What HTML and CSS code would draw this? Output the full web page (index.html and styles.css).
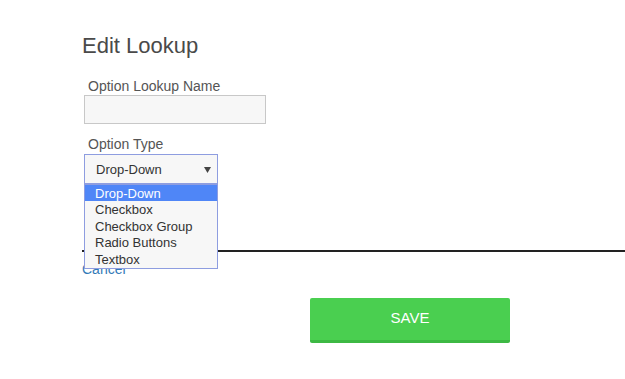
FILE: index.html
```html
<!DOCTYPE html>
<html lang="en">
<head>
    <meta charset="UTF-8">
    <meta name="viewport" content="width=device-width, initial-scale=1.0">
    <title>Edit Lookup</title>
    <link rel="stylesheet" href="styles.css">
</head>
<body>
    <div class="page">
        <h1 class="title">Edit Lookup</h1>

        <label class="field-label">Option Lookup Name</label>
        <div class="text-input"></div>

        <label class="field-label type-label">Option Type</label>
        <div class="select-wrap">
            <div class="select">
                <span>Drop-Down</span>
                <svg class="arrow" width="7" height="6" viewBox="0 0 7 6"><path d="M0 0 H7 L3.5 6 Z" fill="#444"/></svg>
            </div>
            <ul class="options">
                <li class="selected">Drop-Down</li>
                <li>Checkbox</li>
                <li>Checkbox Group</li>
                <li>Radio Buttons</li>
                <li>Textbox</li>
            </ul>
        </div>

        <div class="divider"></div>
        <a class="cancel" href="#">Cancel</a>

        <div class="actions">
            <button class="save-btn">SAVE</button>
        </div>
    </div>
</body>
</html>
```

FILE: styles.css
```css
body {
    margin: 0;
    padding: 0;
    font-family: "Liberation Sans", Arial, sans-serif;
    background: #fff;
    color: #555;
    overflow: hidden;
}

.page {
    padding: 33px 0 0 82px;
}

.title {
    margin: 0;
    font-size: 22px;
    line-height: 25px;
    font-weight: normal;
    color: #4a4a4a;
}

.field-label {
    display: block;
    margin: 20px 0 1px 6px;
    font-size: 14px;
    line-height: 16px;
    color: #555;
}

.type-label {
    margin-top: 12px;
    margin-bottom: 2px;
}

.text-input {
    margin-left: 2px;
    width: 180px;
    height: 27px;
    background: #f7f7f7;
    border: 1px solid #c8c8c8;
}

.select-wrap {
    position: relative;
    margin-left: 2px;
    width: 134px;
}

.select {
    display: flex;
    align-items: center;
    justify-content: space-between;
    box-sizing: border-box;
    height: 30px;
    padding: 0 6px 0 11px;
    background: #f7f7f7;
    border: 1px solid #8e9de0;
    font-size: 13px;
    color: #333;
}

.select span {
    padding-top: 1px;
}

.arrow {
    margin-top: 1px;
}

.options {
    position: absolute;
    top: 100%;
    left: 0;
    width: 134px;
    box-sizing: border-box;
    margin: 0;
    padding: 0 0 1px;
    list-style: none;
    background: #f7f7f7;
    border: 1px solid #8e9de0;
    font-size: 13px;
    color: #333;
    z-index: 2;
}

.options li {
    height: 16.5px;
    line-height: 17px;
    padding-left: 10px;
}

.options li.selected {
    height: 16px;
    background: #4f86f7;
    color: #fff;
}

.divider {
    margin-top: 66px;
    height: 2px;
    background: #222;
}

.cancel {
    display: inline-block;
    margin-top: 9px;
    font-size: 14px;
    line-height: 16px;
    color: #337ab7;
    text-decoration: none;
}

.actions {
    margin: 20px 0 0 228px;
}

.save-btn {
    width: 200px;
    height: 45px;
    border: none;
    border-bottom: 3px solid #3db944;
    border-radius: 2px;
    background: #4acf50;
    color: #fff;
    font-family: "Liberation Sans", Arial, sans-serif;
    font-size: 15px;
    padding: 0 0 3px;
    cursor: pointer;
}
```
